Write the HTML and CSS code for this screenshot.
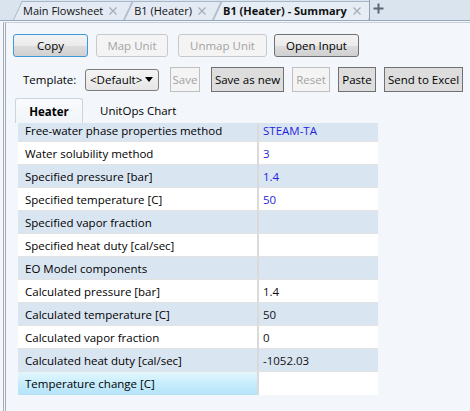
FILE: index.html
```html
<!DOCTYPE html>
<html>
<head>
<meta charset="utf-8">
<link rel="stylesheet" href="styles.css">
</head>
<body>
<div class="tabbar">
  <div class="doc-tab"><span class="tab-text">Main Flowsheet</span><svg class="close" width="8" height="8" viewBox="0 0 8 8"><path d="M0.5 0.5L7.5 7.5M7.5 0.5L0.5 7.5"/></svg></div>
  <div class="doc-tab"><span class="tab-text">B1 (Heater)</span><svg class="close" width="8" height="8" viewBox="0 0 8 8"><path d="M0.5 0.5L7.5 7.5M7.5 0.5L0.5 7.5"/></svg></div>
  <div class="doc-tab active"><span class="tab-text">B1 (Heater) - Summary</span><svg class="close" width="8" height="8" viewBox="0 0 8 8"><path d="M0.5 0.5L7.5 7.5M7.5 0.5L0.5 7.5"/></svg></div>
  <div class="add-tab"><svg width="11" height="11" viewBox="0 0 11 11"><path d="M5.5 0.5V10.5M0.5 5.5H10.5"/></svg></div>
</div>
<div class="panel">
  <div class="toolbar">
    <button class="btn focus w-copy">Copy</button>
    <button class="btn disabled w-map">Map Unit</button>
    <button class="btn disabled w-unmap">Unmap Unit</button>
    <button class="btn w-open">Open Input</button>
  </div>
  <div class="toolbar2">
    <span class="tpl-label">Template:</span>
    <div class="select"><span>&lt;Default&gt;</span><svg width="8" height="5" viewBox="0 0 8 5"><path d="M0 0H8L4 5Z"/></svg></div>
    <button class="fbtn disabled w-save">Save</button>
    <button class="fbtn w-saveas">Save as new</button>
    <button class="fbtn disabled w-reset">Reset</button>
    <button class="fbtn w-paste">Paste</button>
    <button class="fbtn w-excel">Send to Excel</button>
  </div>
  <div class="subtabs">
    <div class="subtab active">Heater</div>
    <div class="subtab">UnitOps Chart</div>
  </div>
  <div class="grid-view">
    <div class="grid-inner">
      <div class="row alt first"><div class="lbl">Free-water phase properties method</div><div class="val input">STEAM-TA</div></div>
      <div class="row"><div class="lbl">Water solubility method</div><div class="val input">3</div></div>
      <div class="row alt"><div class="lbl">Specified pressure [bar]</div><div class="val input">1.4</div></div>
      <div class="row"><div class="lbl">Specified temperature [C]</div><div class="val input">50</div></div>
      <div class="row alt"><div class="lbl">Specified vapor fraction</div><div class="val"></div></div>
      <div class="row"><div class="lbl">Specified heat duty [cal/sec]</div><div class="val"></div></div>
      <div class="row alt"><div class="lbl">EO Model components</div><div class="val"></div></div>
      <div class="row"><div class="lbl">Calculated pressure [bar]</div><div class="val">1.4</div></div>
      <div class="row alt"><div class="lbl">Calculated temperature [C]</div><div class="val">50</div></div>
      <div class="row"><div class="lbl">Calculated vapor fraction</div><div class="val">0</div></div>
      <div class="row alt"><div class="lbl">Calculated heat duty [cal/sec]</div><div class="val">-1052.03</div></div>
      <div class="row selected"><div class="lbl">Temperature change [C]</div><div class="val"></div></div>
    </div>
  </div>
</div>
</body>
</html>
```
FILE: styles.css
```css
* { box-sizing: border-box; }
html, body {
  margin: 0;
  width: 470px;
  height: 411px;
  overflow: hidden;
}
body {
  font-family: "Open Sans", "Noto Sans", sans-serif;
  font-size: 11px;
  color: #000;
  background: #f3f7fb;
}

/* document tab strip */
.tabbar {
  height: 21px;
  background: #dae4ef;
  border-bottom: 1px solid #98a7b9;
  display: flex;
  align-items: flex-end;
  padding-left: 13px;
  margin-bottom: 1px;
}
.doc-tab {
  position: relative;
  z-index: 0;
  height: 19px;
  display: flex;
  align-items: center;
  padding: 0 7px 0 10px;
  gap: 6px;
  color: #111;
}
.doc-tab::before {
  content: "";
  position: absolute;
  inset: 0;
  background: #e3eaf3;
  border: 1px solid #a8b6c7;
  border-bottom: none;
  transform: skewX(-25deg);
  transform-origin: bottom left;
  z-index: -1;
}
.doc-tab.active { font-weight: bold; padding-right: 8px; }
.doc-tab.active::before { background: #e6edf5; }
.close path { stroke: #a4adb8; stroke-width: 1.3; fill: none; }
.add-tab {
  position: relative;
  z-index: 1;
  width: 18px;
  height: 20px;
  margin-left: 0;
  background: #dae4ef;
  border-left: 1px solid #8fa0b4;
  display: flex;
  align-items: center;
  justify-content: center;
  padding-bottom: 3px;
}
.add-tab path { stroke: #5b6677; stroke-width: 2; fill: none; }

/* panel */
.panel {
  margin-left: 3px;
  height: 389px;
  border-left: 3px double #a3acb7;
  border-top: 1px solid #c6d0dc;
  padding: 11px 0 0 7px;
}

.toolbar {
  display: flex;
  height: 23px;
}
.btn {
  height: 23px;
  border: 1px solid #707070;
  border-radius: 3px;
  background: linear-gradient(#f3f3f3, #ebebeb 50%, #dddddd 50%, #d0d0d0);
  font: inherit;
  font-size: 11.5px;
  color: #000;
  padding: 0;
  margin: 0;
}
.btn.focus { border-color: #3c9ad8; }
.btn.disabled {
  border-color: #c9c9c9;
  background: #f4f4f4;
  color: #a3a3a3;
}
.w-copy { width: 75px; }
.w-map { width: 72px; margin-left: 8px; }
.w-unmap { width: 89px; margin-left: 10px; }
.w-open { width: 85px; margin-left: 7px; }

.toolbar2 {
  display: flex;
  align-items: center;
  height: 25px;
  margin-top: 10px;
  padding-left: 10px;
}
.tpl-label { width: 62px; font-size: 11.5px; }
.select {
  width: 74px;
  height: 22px;
  border: 1px solid #7d7d7d;
  border-radius: 3px;
  background: linear-gradient(#f4f4f4, #e6e6e6);
  display: flex;
  align-items: center;
  justify-content: space-between;
  padding: 0 5px 0 4px;
  font-size: 11.5px;
}
.select path { fill: #000; }
.fbtn {
  height: 25px;
  border: 1px solid #707070;
  background: #dddddd;
  font: inherit;
  font-size: 11.5px;
  color: #000;
  padding: 0;
  margin: 0;
}
.fbtn.disabled {
  border-color: #bfbfbf;
  background: #f4f4f4;
  color: #a3a3a3;
}
.w-save { width: 30px; margin-left: 11px; }
.w-saveas { width: 73px; margin-left: 11px; }
.w-reset { width: 38px; margin-left: 8px; }
.w-paste { width: 38px; margin-left: 8px; }
.w-excel { width: 79px; margin-left: 8px; }

/* sub tabs */
.subtabs {
  display: flex;
  align-items: center;
  height: 25px;
  margin-top: 6px;
  padding-left: 2px;
}
.subtab {
  height: 25px;
  display: flex;
  align-items: center;
  font-size: 11.5px;
  padding-left: 17px;
}
.subtab.active {
  width: 68px;
  justify-content: center;
  padding: 0;
  font-weight: bold;
  border: 1px solid #c9d4df;
  border-bottom: none;
  border-radius: 3px 3px 0 0;
  background: linear-gradient(#f9fbfd, #f1f5f9);
}

/* property grid */
.grid-view {
  margin-left: 5px;
  width: 360px;
  height: 272px;
  overflow: hidden;
}
.grid-inner { margin-top: -4px; }
.row {
  display: grid;
  grid-template-columns: 239px 2px 119px;
  height: 23px;
  border-bottom: 1px solid #e2e2e2;
  background: #fff;
}
.row::before { content: ""; grid-column: 2; grid-row: 1; background: #dadada; }
.row.alt { background: #dae5f2; }
.lbl {
  grid-column: 1;
  grid-row: 1;
  display: flex;
  align-items: center;
  padding-left: 7px;
  font-size: 11.5px;
  white-space: nowrap;
}
.val {
  grid-column: 3;
  grid-row: 1;
  display: flex;
  align-items: center;
  padding-left: 4px;
  font-size: 11.5px;
  color: #111;
}
.val.input { color: #1f1fe0; }
.row.selected { background: #fff; border-bottom: none; }
.row.selected .lbl {
  background: linear-gradient(#e4f7fe, #c9eefc 45%, #b4e3f8);
  margin-left: -1px;
  padding-left: 8px;
}
```
